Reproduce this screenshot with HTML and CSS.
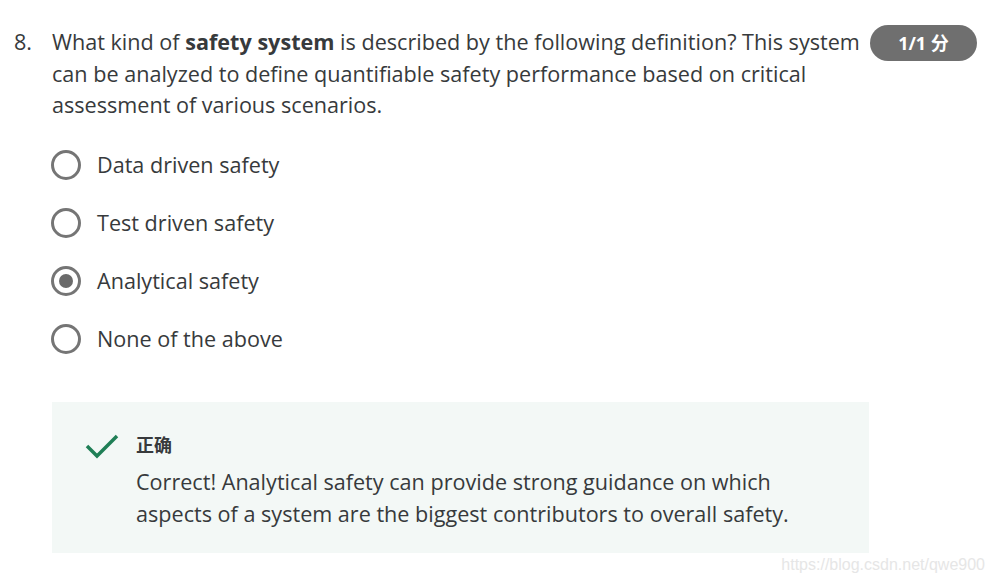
FILE: index.html
```html
<!DOCTYPE html>
<html lang="en">
<head>
    <meta charset="UTF-8">
    <title>Quiz Question</title>
    <link rel="stylesheet" href="styles.css">
</head>
<body>
    <div class="question">
        <div class="question-head">
            <span class="q-number">8.</span>
            <p class="q-text">What kind of <strong>safety system</strong> is described by the following definition? This system can be analyzed to define quantifiable safety performance based on critical assessment of various scenarios.</p>
            <span class="score">1/1 分</span>
        </div>

        <div class="options">
            <label class="option"><span class="radio"></span>Data driven safety</label>
            <label class="option"><span class="radio"></span>Test driven safety</label>
            <label class="option"><span class="radio checked"></span>Analytical safety</label>
            <label class="option"><span class="radio"></span>None of the above</label>
        </div>

        <div class="feedback">
            <svg class="check" width="34" height="26" viewBox="0 0 34 26">
                <path d="M2 12 L12 22 L32 2" fill="none" stroke="#1f7f56" stroke-width="3.5"/>
            </svg>
            <div class="feedback-body">
                <div class="feedback-title">正确</div>
                <p>Correct! Analytical safety can provide strong guidance on which aspects of a system are the biggest contributors to overall safety.</p>
            </div>
        </div>
    </div>
    <div class="watermark">https://blog.csdn.net/qwe900</div>
</body>
</html>
```

FILE: styles.css
```css
body {
    margin: 0;
    padding: 26px 19px 0 14px;
    background-color: #fff;
    font-family: "Open Sans", "Noto Sans CJK SC", sans-serif;
    color: #373a3c;
    font-size: 21.6px;
}

.question-head {
    display: flex;
    align-items: flex-start;
}

.q-number {
    width: 38px;
    flex-shrink: 0;
    line-height: 32px;
}

.q-text {
    flex: 1;
    margin: 0;
    line-height: 31.5px;
}

.q-text strong {
    font-weight: 700;
}

.score {
    flex-shrink: 0;
    margin-top: -1px;
    margin-left: 4px;
    width: 107px;
    height: 36px;
    line-height: 36px;
    border-radius: 18px;
    background-color: #6f6f6f;
    color: #fff;
    font-weight: 700;
    font-size: 18px;
    text-align: center;
}

.options {
    padding: 29px 0 0 37px;
}

.option {
    display: flex;
    align-items: center;
    height: 30px;
    margin-bottom: 28px;
    line-height: 30px;
}

.radio {
    width: 24px;
    height: 24px;
    border: 3px solid #757575;
    border-radius: 50%;
    margin-right: 16px;
    display: flex;
    align-items: center;
    justify-content: center;
    flex-shrink: 0;
}

.radio.checked::after {
    content: "";
    width: 14px;
    height: 14px;
    border-radius: 50%;
    background-color: #6a6a6a;
}

.feedback {
    margin: 48px 0 0 38px;
    width: 817px;
    height: 151px;
    box-sizing: border-box;
    background-color: #f3f8f6;
    display: flex;
    padding: 30px 50px 0 33px;
}

.check {
    flex-shrink: 0;
    margin-top: 2px;
    margin-right: 17px;
}

.feedback-title {
    font-weight: 700;
    font-size: 18px;
    line-height: 26px;
}

.feedback-body p {
    margin: 8px 0 0 0;
    line-height: 32px;
}

.watermark {
    position: absolute;
    right: 11px;
    top: 556px;
    font-family: "Liberation Sans", Arial, sans-serif;
    font-size: 16px;
    color: #e6e6e6;
}
```
